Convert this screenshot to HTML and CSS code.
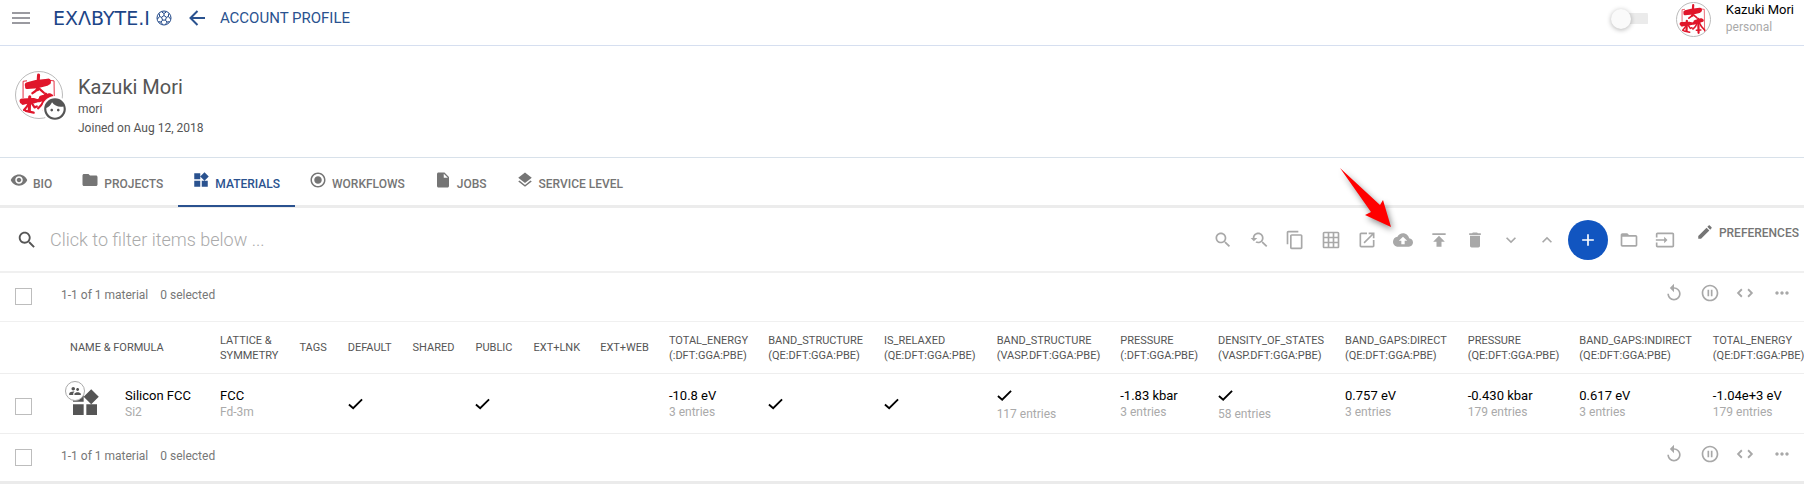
FILE: index.html
```html
<!DOCTYPE html>
<html lang="en">
<head>
<meta charset="utf-8">
<title>Account Profile</title>
<link rel="stylesheet" href="styles.css">
</head>
<body>
<svg class="sprite" aria-hidden="true">
  <symbol id="menu" viewBox="0 0 24 24"><path d="M3 18h18v-2H3v2zm0-5h18v-2H3v2zm0-7v2h18V6H3z"/></symbol>
  <symbol id="ball" viewBox="0 0 16 16"><g fill="none" stroke="currentColor"><circle cx="8" cy="8" r="7"/><path d="M8 5.500l2.400 1.800-.9 2.800h-3l-.9-2.800zM8 5.500V3.500M10.400 7.300l2-.8M9.500 10.100l1.500 2M6.500 10.100l-1.500 2M5.600 7.300l-2-.8M8 3.500L5.500 1.800M8 3.500l2.500-1.700M12.400 6.500l.3-2.800M12.400 6.500L14.500 9M11 12.100l2.500-.5M11 12.100L9.500 14.500M5 12.100l-2.500-.5M5 12.100l1.500 2.400M3.600 6.500l-.3-2.800M3.600 6.500L1.500 9"/></g></symbol>
  <symbol id="back" viewBox="0 0 16 16"><path d="M8.500 1L1.500 8l7 7M1.500 8H16" fill="none" stroke="currentColor" stroke-width="2"/></symbol>
  <symbol id="seal" viewBox="0 0 104 104"><g fill="none" stroke="#e0162b" stroke-linecap="round" stroke-linejoin="round">
    <path stroke-width="2" d="M16 58L16 21L24 20M76 19L86 20L87 90"/>
    <path stroke-width="7" d="M51 7L49 40M31 56L30 88M67 50L68 94"/>
    <path stroke-width="14" d="M27 30L46 25L72 22"/>
    <path stroke-width="9" d="M25 34L50 32L70 27M16 70L36 64L46 65M52 64L70 58L80 55"/>
    <path stroke-width="5" d="M49 37Q45 44 37 48M53 38L63 47M30 68Q26 78 18 86M34 68L42 80L47 78M64 62Q60 74 50 82M70 62Q76 76 88 86M61 86L75 85M22 88L40 92"/>
    <path stroke-width="12" d="M14 66L40 65M58 59L76 54"/></g></symbol>
  <symbol id="face" viewBox="0 0 24 24"><path d="M9 11.750c-.690 0-1.250.560-1.250 1.250s.560 1.250 1.250 1.250 1.250-.560 1.250-1.250-.560-1.250-1.250-1.250zm6 0c-.690 0-1.250.560-1.250 1.250s.560 1.250 1.250 1.250 1.250-.560 1.250-1.250-.560-1.250-1.250-1.250zM12 2C6.480 2 2 6.480 2 12s4.480 10 10 10 10-4.480 10-10S17.520 2 12 2zm0 18c-4.410 0-8-3.590-8-8 0-.290.020-.580.050-.860 2.360-1.050 4.230-2.980 5.210-5.370C11.070 8.330 14.050 10 17.420 10c.780 0 1.530-.090 2.250-.260.210.710.330 1.470.330 2.260 0 4.410-3.590 8-8 8z"/></symbol>
  <symbol id="eye" viewBox="0 0 24 24"><path d="M12 4.500C7 4.500 2.730 7.610 1 12c1.730 4.390 6 7.500 11 7.500s9.270-3.110 11-7.500c-1.730-4.390-6-7.500-11-7.500zM12 17c-2.760 0-5-2.240-5-5s2.240-5 5-5 5 2.240 5 5-2.240 5-5 5zm0-8c-1.660 0-3 1.340-3 3s1.340 3 3 3 3-1.340 3-3-1.340-3-3-3z"/></symbol>
  <symbol id="folder" viewBox="0 0 24 24"><path d="M10 4H4c-1.100 0-2 .9-2 2v12c0 1.100.9 2 2 2h16c1.100 0 2-.9 2-2V8c0-1.100-.9-2-2-2h-8l-2-2z"/></symbol>
  <symbol id="widgets" viewBox="0 0 24 24"><path d="M13 13v8h8v-8h-8zM3 21h8v-8H3v8zM3 3v8h8V3H3zm13.660-1.310L11 7.340 16.660 13l5.660-5.660-5.660-5.650z"/></symbol>
  <symbol id="radio" viewBox="0 0 24 24"><path d="M12 7c-2.760 0-5 2.240-5 5s2.240 5 5 5 5-2.240 5-5-2.240-5-5-5zm0-5C6.480 2 2 6.480 2 12s4.480 10 10 10 10-4.480 10-10S17.520 2 12 2zm0 18c-4.420 0-8-3.580-8-8s3.580-8 8-8 8 3.580 8 8-3.580 8-8 8z"/></symbol>
  <symbol id="file" viewBox="0 0 24 24"><path d="M6 2c-1.100 0-2 .9-2 2v16c0 1.100.9 2 2 2h12c1.100 0 2-.9 2-2V8l-6-6H6zm7 7V3.500L18.500 9H13z"/></symbol>
  <symbol id="layers" viewBox="0 0 24 24"><path d="M11.990 18.540l-7.370-5.730L3 14.070l9 7 9-7-1.630-1.270-7.380 5.740zM12 16l7.360-5.730L21 9l-9-7-9 7 1.630 1.270L12 16z"/></symbol>
  <symbol id="search" viewBox="0 0 24 24"><path d="M15.500 14h-.790l-.280-.270C15.410 12.590 16 11.110 16 9.500 16 5.910 13.090 3 9.500 3S3 5.910 3 9.500 5.910 16 9.500 16c1.610 0 3.090-.590 4.230-1.570l.270.280v.790l5 4.990L20.490 19l-4.990-5zm-6 0C7.010 14 5 11.990 5 9.500S7.010 5 9.500 5 14 7.010 14 9.500 11.990 14 9.500 14z"/></symbol>
  <symbol id="research" viewBox="0 0 24 24"><path d="M17.010 14h-.8l-.270-.270c.980-1.140 1.570-2.610 1.570-4.230 0-3.590-2.910-6.500-6.500-6.500s-6.500 3-6.500 6.500H2l3.840 4 4.160-4H6.510C6.510 7 8.530 5 11.010 5s4.500 2.010 4.500 4.500c0 2.480-2.020 4.500-4.500 4.500-.650 0-1.260-.140-1.820-.380L7.710 15.100c.970.570 2.090.9 3.300.9 1.610 0 3.080-.590 4.220-1.570l.270.270v.790l5.010 4.990L22 19l-4.990-5z"/></symbol>
  <symbol id="copy" viewBox="0 0 24 24"><path d="M16 1H4c-1.100 0-2 .9-2 2v14h2V3h12V1zm3 4H8c-1.100 0-2 .9-2 2v14c0 1.100.9 2 2 2h11c1.100 0 2-.9 2-2V7c0-1.100-.9-2-2-2zm0 16H8V7h11v14z"/></symbol>
  <symbol id="grid" viewBox="0 0 24 24"><path d="M20 2H4c-1.100 0-2 .9-2 2v16c0 1.100.9 2 2 2h16c1.100 0 2-.9 2-2V4c0-1.100-.9-2-2-2zM8 20H4v-4h4v4zm0-6H4v-4h4v4zm0-6H4V4h4v4zm6 12h-4v-4h4v4zm0-6h-4v-4h4v4zm0-6h-4V4h4v4zm6 12h-4v-4h4v4zm0-6h-4v-4h4v4zm0-6h-4V4h4v4z"/></symbol>
  <symbol id="open" viewBox="0 0 24 24"><path d="M19 19H5V5h7V3H5c-1.110 0-2 .9-2 2v14c0 1.100.890 2 2 2h14c1.100 0 2-.9 2-2v-7h-2v7zM14 3v2h3.590l-9.830 9.830 1.410 1.410L19 6.410V10h2V3h-7z"/></symbol>
  <symbol id="cloud" viewBox="0 0 24 24"><path d="M19.350 10.040C18.670 6.590 15.640 4 12 4 9.110 4 6.600 5.640 5.350 8.040 2.340 8.360 0 10.910 0 14c0 3.310 2.690 6 6 6h13c2.760 0 5-2.240 5-5 0-2.640-2.050-4.780-4.650-4.960zM14 13v4h-4v-4H7l5-5 5 5h-3z"/></symbol>
  <symbol id="publish" viewBox="0 0 24 24"><path d="M4 4v2h16V4H4zm1 10h4v6h6v-6h4l-7-7-7 7z"/></symbol>
  <symbol id="trash" viewBox="0 0 24 24"><path d="M6 19c0 1.100.9 2 2 2h8c1.100 0 2-.9 2-2V7H6v12zM19 4h-3.500l-1-1h-5l-1 1H5v2h14V4z"/></symbol>
  <symbol id="down" viewBox="0 0 24 24"><path d="M16.590 8.590L12 13.170 7.410 8.590 6 10l6 6 6-6z"/></symbol>
  <symbol id="up" viewBox="0 0 24 24"><path d="M12 8l-6 6 1.410 1.410L12 10.830l4.590 4.580L18 14z"/></symbol>
  <symbol id="plus" viewBox="0 0 24 24"><path d="M19 13h-6v6h-2v-6H5v-2h6V5h2v6h6v2z"/></symbol>
  <symbol id="folder-open" viewBox="0 0 24 24"><path d="M20 6h-8l-2-2H4c-1.100 0-1.990.9-1.990 2L2 18c0 1.100.9 2 2 2h16c1.100 0 2-.9 2-2V8c0-1.100-.9-2-2-2zm0 12H4V8h16v10z"/></symbol>
  <symbol id="input" viewBox="0 0 24 24"><path d="M21 3.010H3c-1.100 0-2 .9-2 2V9h2V4.990h18v14.030H3V15H1v4.010c0 1.100.9 1.980 2 1.980h18c1.100 0 2-.880 2-1.980v-14c0-1.110-.9-2-2-2zM11 16l4-4-4-4v3H1v2h10v3z"/></symbol>
  <symbol id="edit" viewBox="0 0 24 24"><path d="M3 17.250V21h3.750L17.810 9.940l-3.750-3.750L3 17.250zM20.710 7.040c.390-.390.390-1.020 0-1.410l-2.340-2.340c-.390-.390-1.020-.390-1.410 0l-1.830 1.830 3.750 3.750 1.830-1.830z"/></symbol>
  <symbol id="replay" viewBox="0 0 24 24"><path d="M12 5V1L7 6l5 5V7c3.310 0 6 2.690 6 6s-2.690 6-6 6-6-2.690-6-6H4c0 4.420 3.580 8 8 8s8-3.580 8-8-3.580-8-8-8z"/></symbol>
  <symbol id="pause" viewBox="0 0 24 24"><path d="M9 16h2V8H9v8zm3-14C6.480 2 2 6.480 2 12s4.480 10 10 10 10-4.480 10-10S17.520 2 12 2zm0 18c-4.410 0-8-3.590-8-8s3.590-8 8-8 8 3.590 8 8-3.590 8-8 8zm1-4h2V8h-2v8z"/></symbol>
  <symbol id="code" viewBox="0 0 24 24"><path d="M7 7.500L2.500 12 7 16.500M14.500 7.500L19 12l-4.500 4.500" fill="none" stroke="currentColor" stroke-width="2.200"/></symbol>
  <symbol id="more" viewBox="0 0 24 24"><path d="M6 10c-1.100 0-2 .9-2 2s.9 2 2 2 2-.9 2-2-.9-2-2-2zm12 0c-1.100 0-2 .9-2 2s.9 2 2 2 2-.9 2-2-.9-2-2-2zm-6 0c-1.100 0-2 .9-2 2s.9 2 2 2 2-.9 2-2-.9-2-2-2z"/></symbol>
  <symbol id="people" viewBox="0 0 24 24"><path d="M16.500 12c1.380 0 2.490-1.120 2.490-2.500S17.880 7 16.500 7 14 8.120 14 9.500s1.120 2.500 2.500 2.500zM9 11c1.660 0 2.990-1.340 2.990-3S10.660 5 9 5 6 6.340 6 8s1.340 3 3 3zm7.500 3c-1.830 0-5.500.920-5.500 2.750V19h11v-2.250c0-1.830-3.670-2.750-5.500-2.750zM9 13c-2.330 0-7 1.170-7 3.500V19h7v-2.250c0-.850.330-2.340 2.370-3.470C10.500 13.100 9.660 13 9 13z"/></symbol>
  <symbol id="check" viewBox="0 0 16 12"><path d="M1 6.500l4.500 4L15 1" fill="none" stroke="currentColor" stroke-width="2"/></symbol>
</svg>

<header class="topbar">
  <button class="menu" aria-label="Menu"><svg class="icon-lg"><use href="#menu"/></svg></button>
  <a class="logo" href="#"><span>EXΛBYTE.I</span><svg class="ball"><use href="#ball"/></svg></a>
  <a class="back" href="#"><svg class="icon-sm"><use href="#back"/></svg><span>ACCOUNT PROFILE</span></a>
  <label class="toggle"><input type="checkbox" aria-label="Toggle mode"></label>
  <a class="user" href="#">
    <svg class="avatar"><use href="#seal"/></svg>
    <span class="user-text"><span class="strong">Kazuki Mori</span><span class="muted">personal</span></span>
  </a>
</header>

<section class="profile">
  <div class="portrait"><svg class="avatar"><use href="#seal"/></svg><svg class="face"><use href="#face"/></svg></div>
  <div class="profile-text"><h1>Kazuki Mori</h1><p>mori</p><p>Joined on Aug 12, 2018</p></div>
</section>

<nav class="tabs">
  <a href="#"><svg><use href="#eye"/></svg><span>BIO</span></a>
  <a href="#"><svg><use href="#folder"/></svg><span>PROJECTS</span></a>
  <a href="#" class="active" aria-current="page"><svg><use href="#widgets"/></svg><span>MATERIALS</span></a>
  <a href="#"><svg><use href="#radio"/></svg><span>WORKFLOWS</span></a>
  <a href="#"><svg><use href="#file"/></svg><span>JOBS</span></a>
  <a href="#"><svg><use href="#layers"/></svg><span>SERVICE LEVEL</span></a>
</nav>

<section class="filter">
  <svg class="filter-icon"><use href="#search"/></svg>
  <input type="text" aria-label="Filter items" placeholder="Click to filter items below ...">
  <div class="tools">
    <button aria-label="Search"><svg><use href="#search"/></svg></button>
    <button aria-label="Reset search"><svg><use href="#research"/></svg></button>
    <button aria-label="Copy"><svg><use href="#copy"/></svg></button>
    <button aria-label="Columns"><svg><use href="#grid"/></svg></button>
    <button aria-label="Open"><svg><use href="#open"/></svg></button>
    <button aria-label="Import"><svg><use href="#cloud"/></svg>
      <svg class="pointer" viewBox="0 0 64 74"><path d="M6 7L46 44L49 39L57 66L31 54L37 51Z" fill="#f00"/></svg>
    </button>
    <button aria-label="Upload"><svg><use href="#publish"/></svg></button>
    <button aria-label="Delete"><svg><use href="#trash"/></svg></button>
    <button aria-label="Move down"><svg><use href="#down"/></svg></button>
    <button aria-label="Move up"><svg><use href="#up"/></svg></button>
    <button class="create" aria-label="Create"><svg><use href="#plus"/></svg></button>
    <button aria-label="New folder"><svg><use href="#folder-open"/></svg></button>
    <button aria-label="Move to"><svg><use href="#input"/></svg></button>
  </div>
  <button class="preferences"><svg><use href="#edit"/></svg><span>PREFERENCES</span></button>
</section>

<section class="pager">
  <input type="checkbox" class="box" aria-label="Select all">
  <span>1-1 of 1 material</span><span>0 selected</span>
  <div class="pager-tools">
    <button aria-label="Refresh"><svg><use href="#replay"/></svg></button>
    <button aria-label="Pause"><svg><use href="#pause"/></svg></button>
    <button aria-label="Code"><svg><use href="#code"/></svg></button>
    <button aria-label="More"><svg><use href="#more"/></svg></button>
  </div>
</section>

<div class="table-wrap">
<table>
  <thead><tr>
    <th class="select"></th><th class="name">NAME &amp; FORMULA</th><th class="wide">LATTICE &amp;<br>SYMMETRY</th><th class="wide">TAGS</th><th class="wide">DEFAULT</th><th class="wide">SHARED</th><th class="wide">PUBLIC</th><th>EXT+LNK</th><th>EXT+WEB</th>
    <th>TOTAL_ENERGY<br>(:DFT:GGA:PBE)</th><th class="wide">BAND_STRUCTURE<br>(QE:DFT:GGA:PBE)</th><th class="wide">IS_RELAXED<br>(QE:DFT:GGA:PBE)</th><th>BAND_STRUCTURE<br>(VASP.DFT:GGA:PBE)</th><th>PRESSURE<br>(:DFT:GGA:PBE)</th><th class="wide">DENSITY_OF_STATES<br>(VASP.DFT:GGA:PBE)</th><th class="wide">BAND_GAPS:DIRECT<br>(QE:DFT:GGA:PBE)</th><th>PRESSURE<br>(QE:DFT:GGA:PBE)</th><th class="wide">BAND_GAPS:INDIRECT<br>(QE:DFT:GGA:PBE)</th><th>TOTAL_ENERGY<br>(QE:DFT:GGA:PBE)</th>
  </tr></thead>
  <tbody><tr>
    <td class="select"><input type="checkbox" class="box" aria-label="Select Silicon FCC"></td>
    <td class="name"><div class="material">
      <div class="kind"><svg class="kind-icon"><use href="#widgets"/></svg><span class="shared"><svg><use href="#people"/></svg></span></div>
      <div><div class="strong">Silicon FCC</div><div class="muted">Si2</div></div></div></td>
    <td><div class="strong">FCC</div><div class="muted">Fd-3m</div></td>
    <td></td>
    <td><svg class="check"><use href="#check"/></svg></td>
    <td></td>
    <td><svg class="check"><use href="#check"/></svg></td>
    <td></td><td></td>
    <td><div class="strong">-10.8 eV</div><div class="muted">3 entries</div></td>
    <td><svg class="check"><use href="#check"/></svg></td>
    <td><svg class="check"><use href="#check"/></svg></td>
    <td><svg class="check tall"><use href="#check"/></svg><div class="muted">117 entries</div></td>
    <td><div class="strong">-1.83 kbar</div><div class="muted">3 entries</div></td>
    <td><svg class="check tall"><use href="#check"/></svg><div class="muted">58 entries</div></td>
    <td><div class="strong">0.757 eV</div><div class="muted">3 entries</div></td>
    <td><div class="strong">-0.430 kbar</div><div class="muted">179 entries</div></td>
    <td><div class="strong">0.617 eV</div><div class="muted">3 entries</div></td>
    <td><div class="strong">-1.04e+3 eV</div><div class="muted">179 entries</div></td>
  </tr></tbody>
</table>
</div>

<section class="pager last">
  <input type="checkbox" class="box" aria-label="Select all items">
  <span>1-1 of 1 material</span><span>0 selected</span>
  <div class="pager-tools">
    <button aria-label="Refresh"><svg><use href="#replay"/></svg></button>
    <button aria-label="Pause"><svg><use href="#pause"/></svg></button>
    <button aria-label="Code"><svg><use href="#code"/></svg></button>
    <button aria-label="More"><svg><use href="#more"/></svg></button>
  </div>
</section>
</body>
</html>
```
FILE: styles.css
```css
* { box-sizing: border-box; }
body { margin: 0; background: #fff; color: #555; font: 12px/18px Roboto, "Liberation Sans", sans-serif; }
a { color: inherit; text-decoration: none; }
button { font: inherit; color: inherit; background: none; border: 0; padding: 0; cursor: pointer; }
svg { display: block; fill: currentColor; flex: none; }
.sprite { position: absolute; width: 0; height: 0; }
.strong { color: #000; font-size: 13px; line-height: 17px; }
.muted { color: #aaa; font-size: 12px; line-height: 17px; }

.topbar { display: flex; align-items: center; padding: 0 10px 8px 9px; border-bottom: 1px solid #d6dff0; color: #2a528f; }
.menu, .logo, .back { margin-bottom: 2px; }
.menu { color: #9a9aa0; }
.icon-lg { width: 24px; height: 24px; }
.icon-sm { width: 16px; height: 16px; }
.logo { display: flex; align-items: center; gap: 6px; margin-left: 20px; font: 19px/24px "DejaVu Sans", sans-serif; color: #1d4587; }
.ball { width: 16px; height: 16px; }
.back { display: flex; align-items: center; gap: 15px; margin-left: 17px; font-size: 15px; }
.toggle { margin-left: auto; margin-right: 28px; }
.toggle input { appearance: none; display: block; width: 37px; height: 20px; margin: 0; background: linear-gradient(#ebebeb, #ebebeb) right center / 26px 11px no-repeat; border-radius: 6px; }
.toggle input::before { content: ""; display: block; width: 20px; height: 20px; border-radius: 50%; background: #fafafa; box-shadow: 0 1px 5px rgba(0, 0, 0, .3); }
.user { display: flex; align-items: center; gap: 15px; padding-top: 1px; }
.avatar { width: 35px; height: 35px; border: 1px solid #bbb; border-radius: 50%; }
.user-text { display: flex; flex-direction: column; }
.user-text .muted { line-height: 19px; }

.profile { display: flex; gap: 15px; padding: 25px 15px 19px; border-bottom: 1px solid #d8e1ea; }
.portrait { position: relative; width: 48px; height: 48px; }
.portrait .avatar { width: 48px; height: 48px; }
.face { position: absolute; right: -5px; bottom: -3px; width: 26px; height: 26px; padding: 0; background: #fff; border-radius: 50%; }
.profile-text { padding-top: 3px; }
.profile-text p { margin: 0; line-height: 19px; }
h1 { margin: 0; font-size: 20px; line-height: 26px; font-weight: 400; }

.tabs { display: flex; border-bottom: 3px solid #ececec; color: #757575; font-weight: 500; }
.tabs a { display: flex; align-items: center; gap: 5px; padding: 13px 15px 12px 14px; }
.tabs a:first-child { padding-left: 10px; }
.tabs svg { width: 18px; height: 18px; margin-bottom: 4px; }
.tabs span { padding-top: 4px; line-height: 16px; }
.tabs .active { color: #2a528f; border-bottom: 2px solid #2a528f; margin-bottom: -2px; }

.filter { display: flex; align-items: center; padding: 12px 5px 11px 16px; border-bottom: 2px solid #f0f0f0; }
.filter-icon { width: 22px; height: 22px; }
.filter > input { flex: 1; min-width: 0; margin: 0 0 0 12px; padding: 0; border: 0; outline: 0; font: 300 18px/24px Roboto, sans-serif; color: #555; }
.filter > input::placeholder { color: #aaa; opacity: 1; }
.tools { display: flex; align-items: center; color: #a8a8a8; }
.tools button { position: relative; display: flex; align-items: center; justify-content: center; width: 36px; height: 36px; }
.tools svg { width: 20px; height: 20px; }
.tools .create { width: 40px; height: 40px; margin: 0 3px; border-radius: 50%; background: #1155c0; color: #fff; }
.tools .pointer { position: absolute; left: -51px; top: -61px; width: 64px; height: 74px; overflow: visible; filter: drop-shadow(2px 3px 3px rgba(0, 0, 0, .45)); pointer-events: none; }
.preferences { display: flex; gap: 5px; align-self: flex-start; margin-left: 13px; padding-top: 3px; color: #757575; font-weight: 500; line-height: 20px; }
.preferences svg { width: 18px; height: 18px; }

.pager { display: flex; align-items: flex-start; gap: 12px; padding: 10px 4px 11px 15px; border-bottom: 1px solid #f0f0f0; color: #777; line-height: 24px; }
.box { appearance: none; display: block; flex: none; width: 17px; height: 17px; margin: 5px 17px 0 0; border: 1px solid #bdbdbd; background: #fff; }
.pager-tools { display: flex; margin-left: auto; color: #a8a8a8; }
.pager-tools button { display: flex; justify-content: center; width: 36px; height: 27px; }
.pager-tools svg { width: 20px; height: 20px; }
.last { padding-bottom: 10px; border-bottom: 4px solid #ebebeb; }

.table-wrap { overflow: hidden; }
table { border-spacing: 0; white-space: nowrap; }
th, td { padding: 0 10px; text-align: left; vertical-align: middle; border-bottom: 1px solid #eee; }
th { height: 52px; font-size: 11px; font-weight: 400; line-height: 15px; }
th.wide { padding-right: 11px; }
td { height: 60px; }
.select { min-width: 60px; padding-left: 15px; }
.name { min-width: 150px; }
td.name { padding-left: 5px; }
.material { display: flex; align-items: center; }
.kind { position: relative; width: 60px; height: 34px; padding-left: 4px; }
.kind-icon { width: 32px; height: 32px; color: #555; }
.shared { position: absolute; left: 0; top: -6px; width: 20px; height: 20px; padding: 2px; border: 1px solid #aaa; border-radius: 50%; background: #fff; }
.shared svg { width: 14px; height: 14px; }
.check { width: 15px; height: 12px; color: #000; }
.tall { height: 21px; }
```
